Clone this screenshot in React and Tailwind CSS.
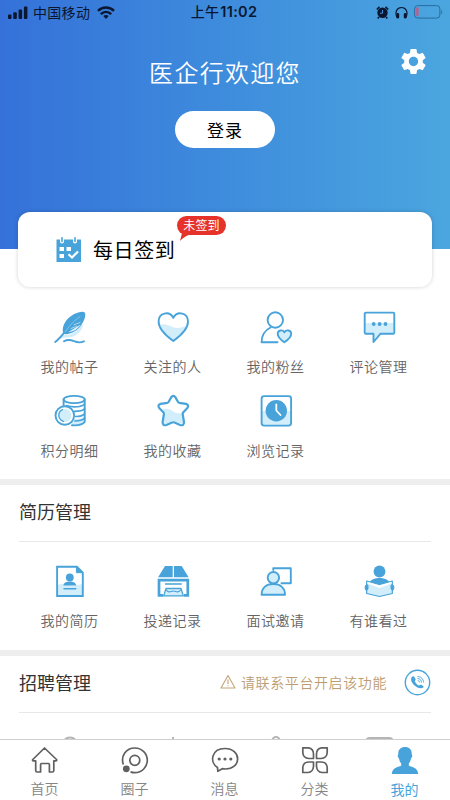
import { MdSettings } from "react-icons/md";

const BLUE = "#47a3d9";
const PALE = "#d3eefb";

const Icon = ({ children }) => (
  <svg
    className="block h-9 w-9 shrink-0"
    viewBox="0 0 36 36"
    fill="none"
    stroke={BLUE}
    strokeWidth="1.9"
    strokeLinecap="round"
    strokeLinejoin="round"
  >
    {children}
  </svg>
);

const FeatherIcon = () => (
  <Icon>
    <path d="M5 31.500C9 27 11 26 14 26C20 26 26 21 30 15L31 17C29 24 22 29 15 28.500C11 28 9 30 5 31.500Z" fill={PALE} stroke="none" />
    <path d="M11.500 25C8 15 19 3.500 30.500 2.800Q33.300 2.700 33.300 5.500C33.300 9 31.500 13 29 16.500C26 21 19 26 11.500 25Z" fill={BLUE} stroke="none" />
    <path d="M16.500 23L28.500 15.500C26 19.500 22 22.800 16.500 23Z" fill="#e3f4fc" stroke="none" />
    <path d="M19 19.500L24.500 17.300M22 15.800L28 13.500" stroke="#c4e7f8" strokeWidth="0.800" />
    <path d="M13 23C17 17.500 21 12.500 28 7.500" stroke="#8fcdee" strokeWidth="0.800" />
    <path d="M3.200 33C6 31 9 27.500 12.500 23.500" strokeWidth="2" />
    <path d="M12 32.300C16 30 19 30.900 22 32.200C26 33.800 29 34 32 32.200" strokeWidth="1.900" />
  </Icon>
);

const HeartIcon = () => (
  <Icon>
    <path d="M4.500 16C10 13.500 14 17 19 18.500C24 20 29 17.500 32 16.500C29 23 24 28 18.300 32C12 27 7 22 4.500 16Z" fill={PALE} stroke="none" />
    <path d="M18.300 32C12.500 27.800 3.600 20.500 3.600 12.700C3.600 3.300 14.500 1.700 18.300 8.800C22.100 1.700 33 3.300 33 12.700C33 20.500 24.100 27.800 18.300 32Z" />
  </Icon>
);

const FansIcon = () => (
  <Icon>
    <circle cx="17.300" cy="11" r="7.700" />
    <path d="M12.500 18.500C6.500 21.500 3.600 27 3.600 33.300H19.500" />
    <path d="M26.400 33.300C23 31 19.700 27.800 19.700 24.800C19.700 21 24.600 20.200 26.400 23.300C28.200 20.200 33.200 21 33.200 24.800C33.200 27.800 29.800 31 26.400 33.300Z" fill={PALE} />
  </Icon>
);

const CommentIcon = () => (
  <Icon>
    <path d="M4.500 14H32.500V24H19L12.500 31V24H4.500Z" fill={PALE} stroke="none" />
    <path d="M5 3.600H32A1.300 1.300 0 0 1 33.300 4.900V23.500A1.300 1.300 0 0 1 32 24.800H19.300L12.500 33V24.800H5A1.300 1.300 0 0 1 3.700 23.500V4.900A1.300 1.300 0 0 1 5 3.600Z" />
    <g fill={BLUE} stroke="none">
      <circle cx="12.700" cy="15" r="1.900" />
      <circle cx="18.600" cy="15" r="1.900" />
      <circle cx="24.500" cy="15" r="1.900" />
    </g>
  </Icon>
);

const CoinsIcon = () => (
  <Icon>
    <path d="M20 26C25 27 30 25 33 23V29C30 32 25 33 20 32Z" fill={PALE} stroke="none" />
    <path d="M11.600 13.500V6.500M32.700 6.500V28.800C31 31.500 26 32.700 20 32.300" />
    <ellipse cx="22.150" cy="6.500" rx="10.550" ry="3.600" />
    <path d="M14.500 12.600C21 14.800 30 14 32.500 11M22.500 18.400C27 18.400 31 17.500 32.500 15.900M23.500 23.500C27.500 23.500 31 22.600 32.500 20.900M22.800 28C27 28 31 27 32.500 25.300" strokeWidth="1.600" />
    <circle cx="12.800" cy="22.500" r="9.300" fill="#fff" />
    <circle cx="12.800" cy="22.500" r="6.600" fill={PALE} stroke="none" />
    <path d="M10.500 16.700C7 18 5.800 22 7.600 25.300C8.500 27 10 28 11.500 28.300" strokeWidth="1.300" />
  </Icon>
);

const StarIcon = () => (
  <Icon>
    <path d="M6 17C12 14.500 15 16 20 19.500C24 21 27 20 28 21L28 31L18 28L8 32L9 22Z" fill={PALE} stroke="none" />
    <path
      d="M16.200 4.200Q18.300 1.500 20.400 4.200L22.900 8.800Q23.300 9.600 24.200 9.800L31 10.900Q34.400 12 32.400 15L28.100 19.500Q27.500 20.200 27.700 21.200L29 29Q29 33.200 25.200 32L19.500 29.500Q18.300 29 17.100 29.500L11.400 32Q7.600 33.200 7.600 29L8.900 21.200Q9.100 20.200 8.500 19.500L4.200 15Q2.200 12 5.600 10.900L12.400 9.800Q13.300 9.600 13.700 8.800Z"
      strokeWidth="2.200"
    />
  </Icon>
);

const HistoryIcon = () => (
  <Icon>
    <path d="M4 18H33V32H4Z" fill={PALE} stroke="none" />
    <rect x="3.600" y="3.100" width="29.500" height="29.500" rx="2.500" />
    <circle cx="18.300" cy="17.800" r="10.700" fill={BLUE} stroke="none" />
    <path d="M18.300 11.500V17.500L22.500 22" stroke="#fff" strokeWidth="1.800" />
  </Icon>
);

const ResumeIcon = () => (
  <Icon>
    <path d="M5 22L12 20.500L20 23L30.500 21V33H5Z" fill={PALE} stroke="none" />
    <path d="M5.100 3.700H24.800L30.800 9.700V33H5.100Z" strokeLinejoin="miter" />
    <path d="M24.800 3.700L30.800 9.700H24.800Z" fill={BLUE} strokeWidth="1" />
    <g fill={BLUE} stroke="none">
      <circle cx="17.800" cy="14.400" r="3.900" />
      <path d="M11.300 22.500C12 19.200 15 18.500 17.800 18.500C20.600 18.500 23.600 19.200 24.300 22.500Z" />
    </g>
    <path d="M12 25.700H23.800" strokeWidth="1.500" />
  </Icon>
);

const BoxIcon = () => (
  <Icon>
    <path d="M10 3H17.700V14.300H3.100ZM19 3H26.700L33.600 14.300H19Z" fill={BLUE} stroke="none" />
    <path d="M8 32.300H4V17.200H32.800V32.300H29" strokeWidth="2.700" strokeLinecap="butt" strokeLinejoin="miter" />
    <path d="M10.500 21H26.300" strokeWidth="1.300" />
    <path d="M11 25.500H26L28.300 32.900H8.700Z" fill={PALE} strokeWidth="1.300" />
    <path d="M11.500 27C13.500 31 16 28 18.300 28C20.600 28 23 31 25.500 27" strokeWidth="1.100" />
  </Icon>
);

const InterviewIcon = () => (
  <Icon>
    <path d="M15.300 7V5.300H32.800V20.200H23.500" />
    <circle cx="15.400" cy="14.700" r="5.700" fill={PALE} />
    <path d="M3.600 31.800C3.600 25 8 21 15.300 21C22.600 21 27 25 27 31.800Z" fill={PALE} />
  </Icon>
);

const ReaderIcon = () => (
  <Icon>
    <circle cx="18.500" cy="8.500" r="5.900" fill={BLUE} stroke="none" />
    <path d="M8.500 19.500C10.500 16 14.500 15 18.500 15C22.500 15 26.500 16 28.500 19.500L18.500 22Z" fill={BLUE} stroke="none" />
    <path d="M5.700 18L18.500 21.500L31.300 18V30.500L18.500 33.500L5.700 30.500Z" fill={PALE} strokeWidth="1.200" />
    <path d="M6.500 19L18.500 22.500L30.500 19V20.500L18.500 25L6.500 20.500Z" fill="#fff" stroke="none" />
    <path d="M5 22C3.700 23.500 3.700 26 5.200 27.500L7 26V22.500ZM32 22C33.300 23.500 33.300 26 31.800 27.500L30 26V22.500Z" fill={BLUE} strokeWidth="1" />
  </Icon>
);

const mainItems = [
  { label: "我的帖子", icon: FeatherIcon },
  { label: "关注的人", icon: HeartIcon },
  { label: "我的粉丝", icon: FansIcon },
  { label: "评论管理", icon: CommentIcon },
  { label: "积分明细", icon: CoinsIcon },
  { label: "我的收藏", icon: StarIcon },
  { label: "浏览记录", icon: HistoryIcon },
];

const resumeItems = [
  { label: "我的简历", icon: ResumeIcon },
  { label: "投递记录", icon: BoxIcon },
  { label: "面试邀请", icon: InterviewIcon },
  { label: "有谁看过", icon: ReaderIcon },
];

const MenuItem = ({ item }) => {
  const ItemIcon = item.icon;
  return (
    <button className="flex h-[84px] flex-col items-center">
      <ItemIcon />
      <span className="mt-[10px] text-[14px] font-[350] leading-[22px] tracking-[0.55px] text-[#646464]">
        {item.label}
      </span>
    </button>
  );
};

const StatusBar = () => (
  <div className="flex h-6 items-center text-[#0b1730]">
    <div className="flex flex-1 items-center pl-2">
      <svg className="h-[13px] w-5" viewBox="0 0 20 13" fill="currentColor">
        <rect x="0" y="8.500" width="3.500" height="4.500" rx="1" />
        <rect x="5.300" y="6.200" width="3.500" height="6.800" rx="1" />
        <rect x="10.600" y="3.500" width="3.500" height="9.500" rx="1" />
        <rect x="15.900" y="0.500" width="3.500" height="12.500" rx="1" />
      </svg>
      <span className="-mt-px ml-[5px] text-[14px] leading-6 tracking-[0.3px]">中国移动</span>
      <svg className="ml-[7px] h-[13px] w-[18px]" viewBox="0 0 18 13" fill="none" stroke="currentColor" strokeWidth="2.500">
        <path d="M1 4.800C5.500 0.300 12.500 0.300 17 4.800M3.800 8.200C7 5.100 11 5.100 14.200 8.200" />
        <path d="M6.300 10.100C7.900 8.700 10.100 8.700 11.700 10.100L9 12.900Z" fill="currentColor" stroke="none" />
      </svg>
    </div>
    <div className="-mt-px pr-[3px] text-[14px] font-medium leading-6 tracking-[0.3px]">
      上午<span className="ml-px font-['Inter'] text-[14.500px] font-semibold">11:02</span>
    </div>
    <div className="flex flex-1 items-center justify-end pr-[7px]">
      <svg className="h-[13px] w-[13px]" viewBox="0 0 13 13">
        <circle cx="6.500" cy="6.800" r="5.200" fill="currentColor" />
        <path d="M0.800 3.500L3.500 0.900M12.200 3.500L9.500 0.900M2.800 11L1.800 12.500M10.200 11L11.200 12.500" stroke="currentColor" strokeWidth="1.700" />
        <path d="M6.500 4V7.200H4" fill="none" stroke="#4591dc" strokeWidth="1" />
      </svg>
      <svg className="ml-[6px] h-[13px] w-[13px]" viewBox="0 0 13 13" fill="none" stroke="currentColor" strokeWidth="1.200">
        <path d="M2 11.500C-0.500 6 2 1.500 6.500 1.500C11 1.500 13.500 6 11 11.500" />
        <rect x="2" y="7.500" width="1.600" height="4.500" rx="0.800" fill="currentColor" />
        <rect x="9.400" y="7.500" width="1.600" height="4.500" rx="0.800" fill="currentColor" />
      </svg>
      <svg className="ml-[6px] h-[14px] w-[29px]" viewBox="0 0 29 14">
        <rect x="0.600" y="0.600" width="25.300" height="12.500" rx="3.200" fill="none" stroke="#286c9e" strokeWidth="1" />
        <rect x="2.300" y="2.300" width="2.200" height="9" rx="1" fill="#d65275" />
        <path d="M27.300 4.700C28.600 5.500 28.600 8.500 27.300 9.300Z" fill="#286c9e" />
      </svg>
    </div>
  </div>
);

const SignCard = () => (
  <div className="relative z-10 mx-[18px] -mt-[37px] flex h-[75px] shrink-0 items-center rounded-[12px] bg-white pl-[38px] shadow-[0_0_4px_rgba(0,0,0,0.18)]">
    <svg className="h-[26px] w-[26px]" viewBox="0 0 26 26">
      <path d="M0.500 2.500H4V4.500A2 2 0 0 0 8 4.500V2.500H17V4.500A2 2 0 0 0 21 4.500V2.500H25V25H0.500Z" fill={BLUE} />
      <path d="M6 0.800V4.500M19 0.800V4.500" stroke={BLUE} strokeWidth="1.600" strokeLinecap="round" />
      <path d="M3.500 10H8V14H3.500ZM10.500 10H15V14H10.500ZM3.500 17H8V21H3.500Z" fill="#fff" />
      <path d="M12.500 17.300L16 20.500L22 14.500" fill="none" stroke="#fff" strokeWidth="2.200" />
    </svg>
    <div className="relative ml-[11px]">
      <span className="text-[20px] leading-7 tracking-[0.6px] text-black">每日签到</span>
      <div className="absolute -top-[19.500px] left-[84px] h-[19px] w-[49px] rounded-full bg-[#e5322a] text-center text-[12px] leading-[18px] tracking-[0.2px] text-white">
        未签到
        <svg className="absolute left-[2px] top-[17px] h-[8px] w-[14px]" viewBox="0 0 14 8">
          <path d="M3 0H13C9 2.500 5 3.500 1 8Z" fill="#e5322a" />
        </svg>
      </div>
    </div>
  </div>
);

const tabs = [
  {
    label: "首页",
    icon: (
      <path d="M13.500 2L25.500 13.500C26 14.300 25.500 14.900 24.800 14.900H22.800V24.500Q22.800 26 21.300 26H18.400V18.500Q18.400 17.500 17.400 17.500H10.600Q9.600 17.500 9.600 18.500V26H6.200Q4.700 26 4.700 24.500V14.900H2.500C1.500 14.900 1.300 14 1.800 13.500Z" />
    ),
  },
  {
    label: "圈子",
    icon: (
      <>
        <path d="M2.300 18.500C-0.500 10 5 2 13.800 2C21 2 26.300 7.500 26.300 14.300C26.300 21 21 26.700 13.800 26.700C12 26.700 10.800 26.400 9.500 25.900" />
        <circle cx="13.800" cy="14.300" r="5" />
        <circle cx="5.300" cy="22.800" r="3.400" fill="#606060" stroke="none" />
      </>
    ),
  },
  {
    label: "消息",
    icon: (
      <>
        <path d="M6.500 21.500C-1.500 16.500 0 2.500 14 2.500C22 2.500 26.600 7.500 26.600 12.700C26.600 19 21.500 23 14.500 23C13.500 23 12.300 22.900 11.300 22.700L6.800 25.300Z" />
        <g fill="#606060" stroke="none">
          <circle cx="8.200" cy="13" r="1.600" />
          <circle cx="14" cy="13" r="1.600" />
          <circle cx="19.800" cy="13" r="1.600" />
        </g>
      </>
    ),
  },
  {
    label: "分类",
    icon: (
      <>
        <path d="M1.800 1.800H7.500Q12.500 2.500 12.500 8V12.500H8Q2 12 1.800 6.500Z" />
        <path d="M26.200 1.800H20.500Q15.500 2.500 15.500 8V12.500H20Q26 12 26.200 6.500Z" />
        <path d="M1.800 26.500V21Q2.500 16 8 16H12.500V20.500Q12 26 7 26.500Z" />
        <path d="M26.200 26.500V21Q25.500 16 20 16H15.500V20.500Q16 26 21 26.500Z" />
      </>
    ),
  },
];

const TabBar = () => (
  <nav className="grid h-[61px] shrink-0 grid-cols-5 border-t border-[#cfcfcf] bg-white">
    {tabs.map((tab) => (
      <button key={tab.label} className="flex flex-col items-center pr-px pt-[6px]">
        <svg className="h-7 w-7" viewBox="0 0 28 28" fill="none" stroke="#606060" strokeWidth="1.700" strokeLinejoin="round">
          {tab.icon}
        </svg>
        <span className="mt-[4px] text-[14px] font-[350] leading-5 text-[#858585]">{tab.label}</span>
      </button>
    ))}
    <button className="flex flex-col items-center pr-px pt-[6px]">
      <svg className="h-7 w-7" viewBox="0 0 28 28" fill={BLUE}>
        <path d="M14 1C9.500 1 6.800 4 7.300 8.500C6.300 9 6.800 12 8 12.500C8.500 15 9.300 16.500 10.200 17.500V19.500C8 21.500 1.500 20.500 0.800 28H27.200C26.500 20.500 20 21.500 17.800 19.500V17.500C18.700 16.500 19.500 15 20 12.500C21.200 12 21.700 9 20.700 8.500C21.200 4 18.500 1 14 1Z" />
      </svg>
      <span className="mt-[5px] text-[14px] leading-5 text-[#47a3d9]">我的</span>
    </button>
  </nav>
);

export default function App() {
  return (
    <div className="flex h-[800px] w-[450px] flex-col overflow-hidden bg-white font-['Noto_Sans_CJK_SC',sans-serif]">
      <main className="flex min-h-0 flex-1 flex-col overflow-hidden">
        <header className="h-[249px] shrink-0 bg-linear-to-r from-[#3571d9] to-[#4ba6df]">
          <StatusBar />
          <div className="grid grid-cols-[1fr_auto_1fr] pt-[24px]">
            <h1 className="col-start-2 pt-[6px] text-[24px] font-[350] leading-9 tracking-[1.300px] text-white">
              医企行欢迎您
            </h1>
            <button className="mr-[21px] h-[30px] w-[31px] justify-self-end -mt-[2px]">
              <MdSettings className="h-[31px] w-[31px] text-white" />
            </button>
          </div>
          <button className="mx-auto mt-[21px] block h-[37px] w-[100px] rounded-full bg-white text-[17px] leading-[34px] tracking-[1px] text-black">
            登录
          </button>
        </header>

        <SignCard />

        <div className="ml-[18px] mr-5 mt-[22px] grid h-[170px] shrink-0 grid-cols-4 content-start">
          {mainItems.map((item) => (
            <MenuItem key={item.label} item={item} />
          ))}
        </div>

        <section className="h-[171px] shrink-0 border-t-[6px] border-[#eeeeee]">
          <h2 className="mx-[19px] h-[57px] border-b border-[#e8e8e8] text-[18px] leading-[53px] text-[#333]">
            简历管理
          </h2>
          <div className="ml-[18px] mr-5 mt-[21px] grid grid-cols-4">
            {resumeItems.map((item) => (
              <MenuItem key={item.label} item={item} />
            ))}
          </div>
        </section>

        <section className="shrink-0 border-t-[6px] border-[#eeeeee]">
          <div className="mx-[19px] flex h-[57px] items-center border-b border-[#e8e8e8] pb-[4px]">
            <h2 className="flex-1 text-[18px] leading-7 text-[#333]">招聘管理</h2>
            <svg className="h-4 w-4" viewBox="0 0 16 16" fill="none" stroke="#c3a57a" strokeWidth="1.100" strokeLinejoin="round">
              <path d="M8 1.500L15 14H1ZM8 5.500V10M8 11.200V12.300" />
            </svg>
            <span className="ml-[5px] text-[14px] font-[350] leading-6 tracking-[0.600px] text-[#bd9d70]">
              请联系平台开启该功能
            </span>
            <svg className="ml-[17px] h-[27px] w-[27px]" viewBox="0 0 27 27" fill="none" stroke={BLUE}>
              <circle cx="13.500" cy="13.500" r="12.200" strokeWidth="1.400" />
              <path d="M8.500 7.500C6 9 7 13 10 16C13 19 17.500 20.500 19.500 18.300C20 17.500 19.500 17 17.500 16C16.500 15.500 16 16.500 15 16.500C13.500 16 11.500 14 11 12.500C10.900 11.500 12 11 11.500 10C10.300 7.500 9.500 7 8.500 7.500Z" fill={BLUE} stroke="none" />
              <path d="M13.500 7.500C17 7.500 19.500 10 19.500 13.500M13.500 9.500C16 9.500 17.500 11.300 17.500 13.500M13.700 11.700C15 11.700 15.600 12.500 15.600 13.500" strokeWidth="0.900" />
            </svg>
          </div>
          <div className="ml-[18px] mr-5 grid h-[60px] grid-cols-4 justify-items-center pt-[21px]">
            <svg className="h-9 w-9" viewBox="0 0 36 36" fill="none" stroke="#b5b5b5" strokeWidth="2">
              <circle cx="18" cy="11" r="7.500" />
            </svg>
            <svg className="h-9 w-9" viewBox="0 0 36 36" fill="none" stroke="#b5b5b5" strokeWidth="2">
              <path d="M18 3V14M10 14H26V30H10Z" />
            </svg>
            <svg className="h-9 w-9" viewBox="0 0 36 36" fill="none" stroke="#b5b5b5" strokeWidth="2">
              <circle cx="18" cy="6.500" r="3.500" />
            </svg>
            <svg className="h-9 w-9" viewBox="0 0 36 36" fill="none" stroke="#b5b5b5" strokeWidth="2">
              <rect x="5.500" y="4" width="26" height="26" rx="3" />
            </svg>
          </div>
        </section>
      </main>
      <TabBar />
    </div>
  );
}
